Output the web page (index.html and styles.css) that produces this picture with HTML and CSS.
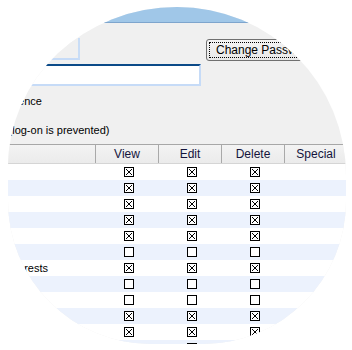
FILE: index.html
```html
<!DOCTYPE html>
<html>
<head>
<meta charset="utf-8">
<link rel="stylesheet" href="styles.css">
</head>
<body>
<div class="lens">
  <div class="window">
    <div class="titlebar"></div>
    <div class="form">
      <div class="toprow">
        <div class="field readonly"></div>
        <button class="btn"><span class="focus">Change Password...</span></button>
      </div>
      <div class="field active"></div>
      <div class="opt opt-first">Licence</div>
      <div class="opt opt-second">Locked (log-on is prevented)</div>

      <div class="grid">
        <div class="hrow">
          <div class="hcell name"></div>
          <div class="hcell">View</div>
          <div class="hcell">Edit</div>
          <div class="hcell">Delete</div>
          <div class="hcell">Special</div>
        </div>
        <div class="brows" id="rows"></div>
      </div>
    </div>
  </div>
</div>
<script src="app.js"></script>
</body>
</html>
```
FILE: styles.css
```css
html, body {
  margin: 0;
  padding: 0;
  background: #ffffff;
}
body {
  font-family: "Liberation Sans", Arial, sans-serif;
  font-size: 11px;
  color: #000;
}
.lens {
  margin: 7px 0 0 8px;
  width: 338px;
  height: 337px;
  overflow: hidden;
  border-radius: 169px 169px 143px 143px / 160px 169px 143px 143px;
  background: #f0f0f0;
}
.window {
  width: 338px;
}
.titlebar {
  height: 15px;
  background: #a0c7e8;
  border-bottom: 1px solid #7ea5cd;
}
.form {
  display: flex;
  flex-direction: column;
  padding-top: 15px;
}
.toprow {
  display: flex;
  align-items: flex-start;
  height: 23px;
}
.field {
  box-sizing: border-box;
  height: 22px;
  border: 2px solid #c6dbf7;
  border-left: none;
}
.field.readonly {
  width: 72px;
  background: #f0f0f0;
  border-top: none;
  border-right-color: #c9ddf6;
}
.field.active {
  width: 193px;
  margin-top: 3px;
  background: #ffffff;
  border-top: 2px solid #0b4a88;
}
.btn {
  box-sizing: border-box;
  margin: 1px 0 0 126px;
  width: 130px;
  height: 22px;
  padding: 2px;
  border: 1px solid #707070;
  border-radius: 3px;
  background: linear-gradient(#f4f4f4, #e8e8e8);
  font-family: "Liberation Sans", Arial, sans-serif;
  font-size: 12px;
  color: #000;
  text-align: left;
}
.focus {
  display: block;
  box-sizing: border-box;
  height: 16px;
  line-height: 14px;
  border: 1px dotted #000;
  padding-left: 6px;
  white-space: nowrap;
}
.opt {
  height: 13px;
  line-height: 13px;
  white-space: nowrap;
}
.opt-first {
  margin: 9px 0 0 -4px;
}
.opt-second {
  margin: 16px 0 0 -38px;
}
.grid {
  margin: 7px 0 0 -100px;
  width: 440px;
}
.hrow {
  display: grid;
  grid-template-columns: 188px 63px 63px 63px 63px;
  height: 20px;
  box-sizing: border-box;
  border-top: 1px solid #a7a7a7;
  border-bottom: 1px solid #d5d5d5;
  background: linear-gradient(#f3f3f3, #ebebeb);
}
.hcell {
  box-sizing: border-box;
  border-right: 1px solid #a9a9a9;
  text-align: center;
  font-size: 12px;
  line-height: 18px;
  color: #14143c;
}
.brow {
  display: grid;
  grid-template-columns: 188px 63px 63px 63px 63px;
  height: 16px;
  background: #ffffff;
}
.brow.alt {
  background: #ecf2fd;
}
.bcell {
  display: flex;
  align-items: center;
  justify-content: center;
}
.bcell.label {
  justify-content: flex-start;
  padding-left: 55px;
  white-space: nowrap;
  line-height: 16px;
}
.cb {
  display: block;
  width: 10px;
  height: 10px;
  margin-left: 2px;
}
```
FILE: app.js
```js
var rows = [
  ["Users", 1], ["Groups", 1], ["Roles", 1], ["Tasks", 1], ["Notes", 1],
  ["Files", 0], ["Manage Interests", 1], ["Reports", 0], ["Events", 0],
  ["Emails", 1], ["Sites", 1], ["Forms", 1]
];
var box = function (on) {
  var x = on ? '<path d="M2 2 L8 8 M8 2 L2 8" stroke="#000" stroke-width="1"/>' : '';
  return '<svg class="cb" viewBox="0 0 10 10"><rect x="0.5" y="0.5" width="9" height="9" fill="#fff" stroke="#000"/>' + x + '</svg>';
};
var html = '';
rows.forEach(function (r, i) {
  html += '<div class="brow' + (i % 2 ? ' alt' : '') + '">' +
    '<div class="bcell label">' + r[0] + '</div>' +
    '<div class="bcell">' + box(r[1]) + '</div>' +
    '<div class="bcell">' + box(r[1]) + '</div>' +
    '<div class="bcell">' + box(r[1]) + '</div>' +
    '<div class="bcell"></div></div>';
});
document.getElementById('rows').innerHTML = html;
```
